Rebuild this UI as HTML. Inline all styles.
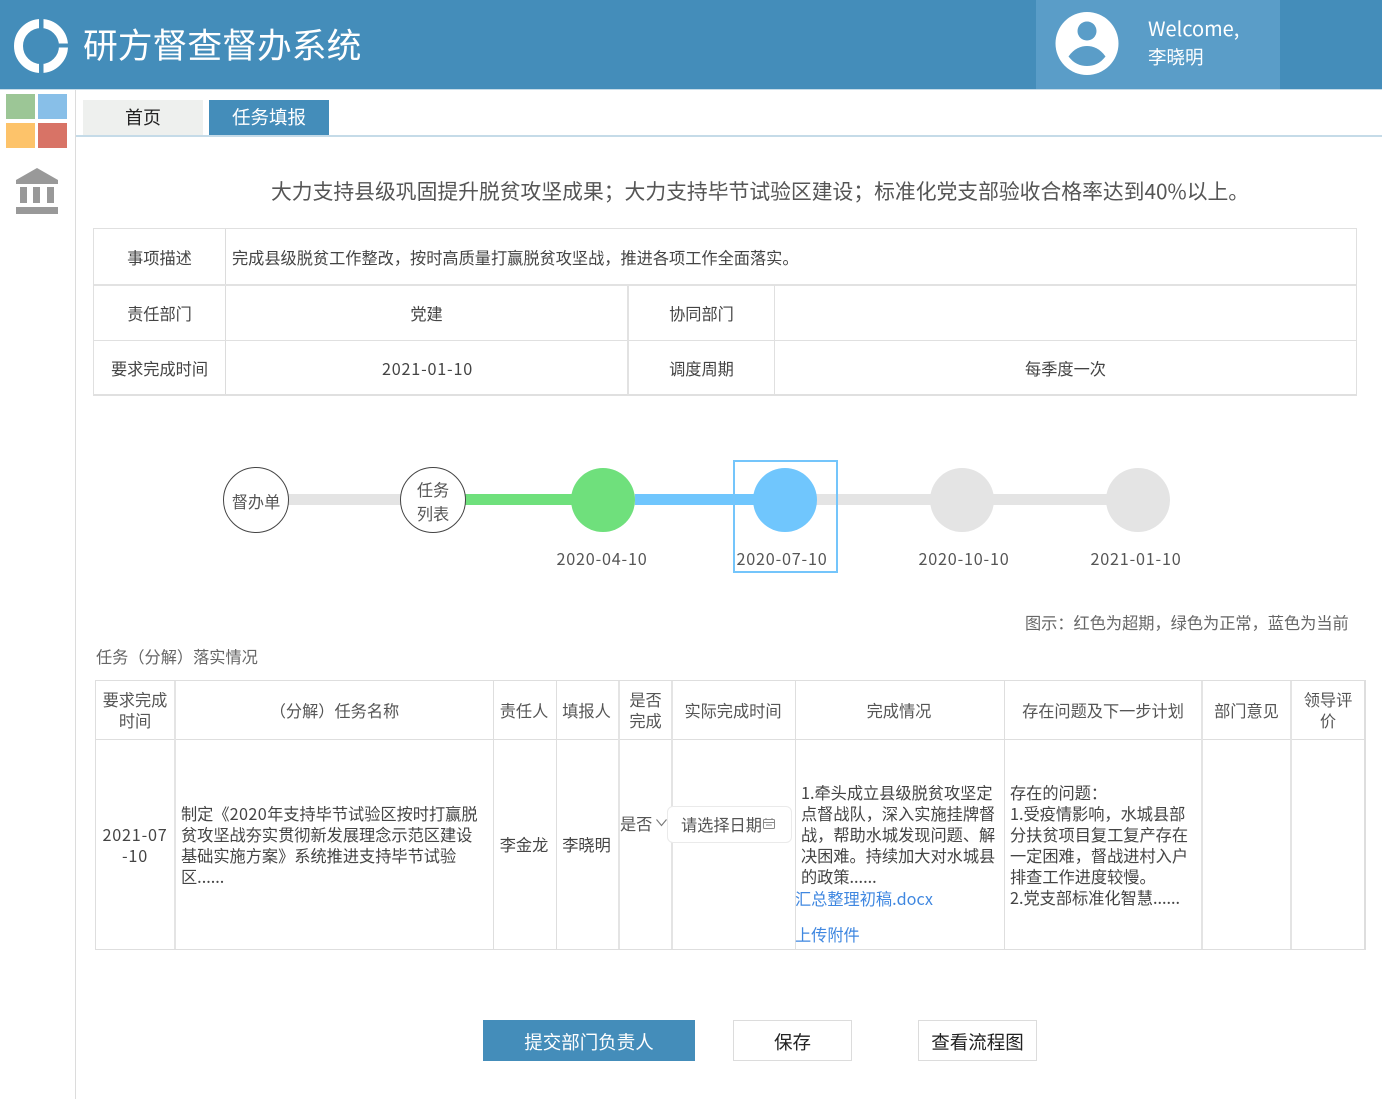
<!DOCTYPE html>
<html lang="zh"><head><meta charset="utf-8"><title>研方督查督办系统</title>
<style>
html,body{margin:0;padding:0;background:#fff}
body{width:1382px;height:1099px;position:relative;overflow:hidden;font-family:"Liberation Sans","Noto Sans CJK SC",sans-serif;font-size:16px;color:#555}
.a,.t{position:absolute}
.t{white-space:nowrap;font-family:"Noto Sans CJK SC","Liberation Sans",sans-serif;line-height:22px;height:22px;font-size:16.2px;margin-top:-1px}
.c{text-align:center}
.d{letter-spacing:.8px}
.k{color:#444}
.n{letter-spacing:.4px}
</style></head><body>
<div class="a" style="left:0;top:0;width:1382px;height:89px;background:#448dba"></div>
<div class="a" style="left:0;top:89px;width:1382px;height:1px;background:#c5dbe8"></div>
<svg class="a" style="left:0;top:0" width="90" height="89">
<circle cx="41" cy="46" r="22.5" fill="none" stroke="#fff" stroke-width="9"/>
<rect x="39" y="15" width="4.5" height="62" fill="#448dba"/>
<rect x="52" y="43.5" width="20" height="4" fill="#448dba"/>
</svg>
<div class="t" style="left:83px;top:21px;height:48px;line-height:48px;font-size:34.8px;color:#fff">研方督查督办系统</div>
<div class="a" style="left:1036px;top:0;width:244px;height:89px;background:#5a9dc8"></div>
<svg class="a" style="left:1050px;top:5px" width="76" height="76">
<circle cx="37" cy="38.5" r="31.5" fill="#fff"/>
<circle cx="37" cy="26" r="9.5" fill="#5a9dc8"/>
<path d="M18.5 51.5C24 43.5 31 41 37 41S50 43.5 55.5 51.5C50 58.5 44 61 37 61S24 58.5 18.5 51.5Z" fill="#5a9dc8"/>
</svg>
<div class="t" style="left:1148px;top:18px;font-size:20px;color:#fff;letter-spacing:0">Welcome,</div>
<div class="t" style="left:1148px;top:47px;font-size:18.5px;color:#fff">李晓明</div>

<div class="a" style="left:75px;top:90px;width:1px;height:1009px;background:#dcdcdc"></div>
<div class="a" style="left:6px;top:94px;width:29px;height:25px;background:#9cc696"></div>
<div class="a" style="left:38px;top:94px;width:29px;height:25px;background:#88bfe8"></div>
<div class="a" style="left:6px;top:123px;width:29px;height:25px;background:#fdc36a"></div>
<div class="a" style="left:38px;top:123px;width:29px;height:25px;background:#d87366"></div>
<svg class="a" style="left:0;top:160px" width="75" height="60" fill="#999">
<path d="M37 8L58 20V24H16V20Z"/>
<rect x="20" y="27" width="7" height="16"/><rect x="33" y="27" width="7" height="16"/><rect x="47" y="27" width="7" height="16"/>
<rect x="16" y="47" width="42" height="7"/>
</svg>

<div class="a" style="left:83px;top:100px;width:120px;height:35px;background:#eef0ee"></div>
<div class="a" style="left:209px;top:100px;width:120px;height:35px;background:#448dba"></div>
<div class="a" style="left:76px;top:135px;width:1306px;height:2px;background:#c5dbe8"></div>
<div class="t c" style="left:83px;width:120px;top:107px;font-size:18px;color:#222">首页</div>
<div class="t c" style="left:209px;width:120px;top:107px;font-size:18.5px;color:#fff">任务填报</div>

<div class="t" style="left:271px;top:177px;height:28px;line-height:28px;font-size:20.8px;color:#555">大力支持县级巩固提升脱贫攻坚成果；大力支持毕节试验区建设；标准化党支部验收合格率达到40%以上。</div>

<!-- table 1 -->
<div class="a" style="left:93px;top:228px;width:1262px;height:165px;border:solid #e0e0e0;border-width:1px 1px 2px 1px"></div>
<div class="a" style="left:225px;top:229px;width:1px;height:165px;background:#dcdcdc"></div>
<div class="a" style="left:94px;top:284px;width:1262px;height:2px;background:#e2e2e2"></div>
<div class="a" style="left:94px;top:340px;width:1262px;height:1px;background:#e0e0e0"></div>
<div class="a" style="left:627px;top:285px;width:2px;height:109px;background:#e2e2e2"></div>
<div class="a" style="left:774px;top:285px;width:1px;height:109px;background:#e0e0e0"></div>
<div class="t c k" style="left:94px;width:131px;top:247px">事项描述</div>
<div class="t k" style="left:232px;top:247px">完成县级脱贫工作整改，按时高质量打赢脱贫攻坚战，推进各项工作全面落实。</div>
<div class="t c k" style="left:94px;width:131px;top:303px">责任部门</div>
<div class="t c k" style="left:226px;width:401px;top:303px">党建</div>
<div class="t c k" style="left:629px;width:145px;top:303px">协同部门</div>
<div class="t c k" style="left:94px;width:131px;top:358px">要求完成时间</div>
<div class="t c k d" style="left:227px;width:401px;top:358px">2021-01-10</div>
<div class="t c k" style="left:629px;width:145px;top:358px">调度周期</div>
<div class="t c k" style="left:775px;width:581px;top:358px">每季度一次</div>

<!-- timeline -->
<div class="a" style="left:288px;top:494px;width:850px;height:11px;background:#e4e4e4"></div>
<div class="a" style="left:465px;top:494px;width:110px;height:11px;background:#6fe07c"></div>
<div class="a" style="left:635px;top:494px;width:122px;height:11px;background:#70c6fd"></div>
<div class="a" style="left:733px;top:460px;width:101px;height:109px;border:2px solid #74c5fb"></div>
<div class="a" style="left:223px;top:467px;width:64px;height:64px;border:1px solid #444;border-radius:50%;background:#fff"></div>
<div class="a" style="left:400px;top:467px;width:64px;height:64px;border:1px solid #444;border-radius:50%;background:#fff"></div>
<div class="a" style="left:571px;top:468px;width:64px;height:64px;border-radius:50%;background:#6fe07c"></div>
<div class="a" style="left:753px;top:468px;width:64px;height:64px;border-radius:50%;background:#70c6fd"></div>
<div class="a" style="left:930px;top:468px;width:64px;height:64px;border-radius:50%;background:#e4e4e4"></div>
<div class="a" style="left:1106px;top:468px;width:64px;height:64px;border-radius:50%;background:#e4e4e4"></div>
<div class="t c" style="left:223px;width:66px;top:491px">督办单</div>
<div class="t c" style="left:400px;width:66px;top:479px">任务</div>
<div class="t c" style="left:400px;width:66px;top:503px">列表</div>
<div class="t c d" style="left:542px;width:120px;top:548px">2020-04-10</div>
<div class="t c d" style="left:722px;width:120px;top:548px">2020-07-10</div>
<div class="t c d" style="left:904px;width:120px;top:548px">2020-10-10</div>
<div class="t c d" style="left:1076px;width:120px;top:548px">2021-01-10</div>

<div class="t" style="left:1025px;top:612px;color:#666">图示：红色为超期，绿色为正常，蓝色为当前</div>
<div class="t" style="left:96px;top:646px;color:#666">任务（分解）落实情况</div>

<!-- table 2 -->
<div class="a" style="left:95px;top:680px;width:1268px;height:268px;border:solid #dedede;border-width:1px 2px 1px 1px"></div>
<div class="a" style="left:96px;top:739px;width:1268px;height:1px;background:#dedede"></div>
<div class="a" style="left:174px;top:681px;width:2px;height:268px;background:#e4e4e4"></div>
<div class="a" style="left:493px;top:681px;width:1px;height:268px;background:#dedede"></div>
<div class="a" style="left:556px;top:681px;width:1px;height:268px;background:#dedede"></div>
<div class="a" style="left:618px;top:681px;width:2px;height:268px;background:#e4e4e4"></div>
<div class="a" style="left:671px;top:681px;width:2px;height:268px;background:#e4e4e4"></div>
<div class="a" style="left:795px;top:681px;width:1px;height:268px;background:#dedede"></div>
<div class="a" style="left:1004px;top:681px;width:1px;height:268px;background:#dedede"></div>
<div class="a" style="left:1201px;top:681px;width:2px;height:268px;background:#e4e4e4"></div>
<div class="a" style="left:1290px;top:681px;width:2px;height:268px;background:#e4e4e4"></div>

<div class="t c" style="left:96px;width:78px;top:689px">要求完成</div>
<div class="t c" style="left:96px;width:78px;top:710px">时间</div>
<div class="t c" style="left:176px;width:317px;top:700px">（分解）任务名称</div>
<div class="t c" style="left:493px;width:62px;top:700px">责任人</div>
<div class="t c" style="left:556px;width:61px;top:700px">填报人</div>
<div class="t c" style="left:620px;width:51px;top:689px">是否</div>
<div class="t c" style="left:620px;width:51px;top:710px">完成</div>
<div class="t c" style="left:672px;width:122px;top:700px">实际完成时间</div>
<div class="t c" style="left:795px;width:208px;top:700px">完成情况</div>
<div class="t c" style="left:1005px;width:196px;top:700px">存在问题及下一步计划</div>
<div class="t c" style="left:1203px;width:87px;top:700px">部门意见</div>
<div class="t c" style="left:1292px;width:72px;top:689px">领导评</div>
<div class="t c" style="left:1292px;width:72px;top:710px">价</div>

<div class="t c k d" style="left:96px;width:78px;top:824px">2021-07</div>
<div class="t c k d" style="left:96px;width:78px;top:845px">-10</div>
<div class="t k" style="left:181px;top:803px">制定《<span class="n">2020</span>年支持毕节试验区按时打赢脱</div>
<div class="t k" style="left:181px;top:824px">贫攻坚战夯实贯彻新发展理念示范区建设</div>
<div class="t k" style="left:181px;top:845px">基础实施方案》系统推进支持毕节试验</div>
<div class="t k" style="left:181px;top:866px">区......</div>
<div class="t c k" style="left:493px;width:62px;top:834px">李金龙</div>
<div class="t c k" style="left:556px;width:61px;top:834px">李晓明</div>
<div class="t" style="left:620px;top:813px">是否</div>
<svg class="a" style="left:655px;top:818px" width="13" height="10"><path d="M1.5 1.5L6.5 7.5L11.5 1.5" fill="none" stroke="#777" stroke-width="1.1"/></svg>
<div class="a" style="left:667px;top:806px;width:123px;height:35px;border:1px solid #eaeaea;border-radius:6px;background:#fff"></div>
<div class="t" style="left:681px;top:814px">请选择日期</div>
<svg class="a" style="left:762px;top:817px" width="14" height="13" fill="none" stroke="#888"><rect x="1.5" y="2.5" width="11" height="9" rx="1"/><path d="M1.5 5.5H12.5M4 1V3M10 1V3M4 8H10" /></svg>

<div class="t k" style="left:801px;top:782px">1.牵头成立县级脱贫攻坚定</div>
<div class="t k" style="left:801px;top:803px">点督战队，深入实施挂牌督</div>
<div class="t k" style="left:801px;top:824px">战，帮助水城发现问题、解</div>
<div class="t k" style="left:801px;top:845px">决困难。持续加大对水城县</div>
<div class="t k" style="left:801px;top:866px">的政策......</div>
<div class="t" style="left:795px;top:888px;color:#3f87e0">汇总整理初稿.docx</div>
<div class="t" style="left:795px;top:924px;color:#3f87e0">上传附件</div>

<div class="t k" style="left:1010px;top:782px">存在的问题：</div>
<div class="t k" style="left:1010px;top:803px">1.受疫情影响，水城县部</div>
<div class="t k" style="left:1010px;top:824px">分扶贫项目复工复产存在</div>
<div class="t k" style="left:1010px;top:845px">一定困难，督战进村入户</div>
<div class="t k" style="left:1010px;top:866px">排查工作进度较慢。</div>
<div class="t k" style="left:1010px;top:887px">2.党支部标准化智慧......</div>

<!-- buttons -->
<div class="a" style="left:483px;top:1020px;width:212px;height:41px;background:#448dba"></div>
<div class="a" style="left:733px;top:1020px;width:117px;height:39px;border:1px solid #dcdcdc"></div>
<div class="a" style="left:918px;top:1020px;width:117px;height:39px;border:1px solid #dcdcdc"></div>
<div class="t c" style="left:483px;width:212px;top:1032px;font-size:18.5px;color:#fff">提交部门负责人</div>
<div class="t c" style="left:733px;width:119px;top:1032px;font-size:18.5px;color:#222">保存</div>
<div class="t c" style="left:918px;width:119px;top:1032px;font-size:18.5px;color:#222">查看流程图</div>
</body></html>
